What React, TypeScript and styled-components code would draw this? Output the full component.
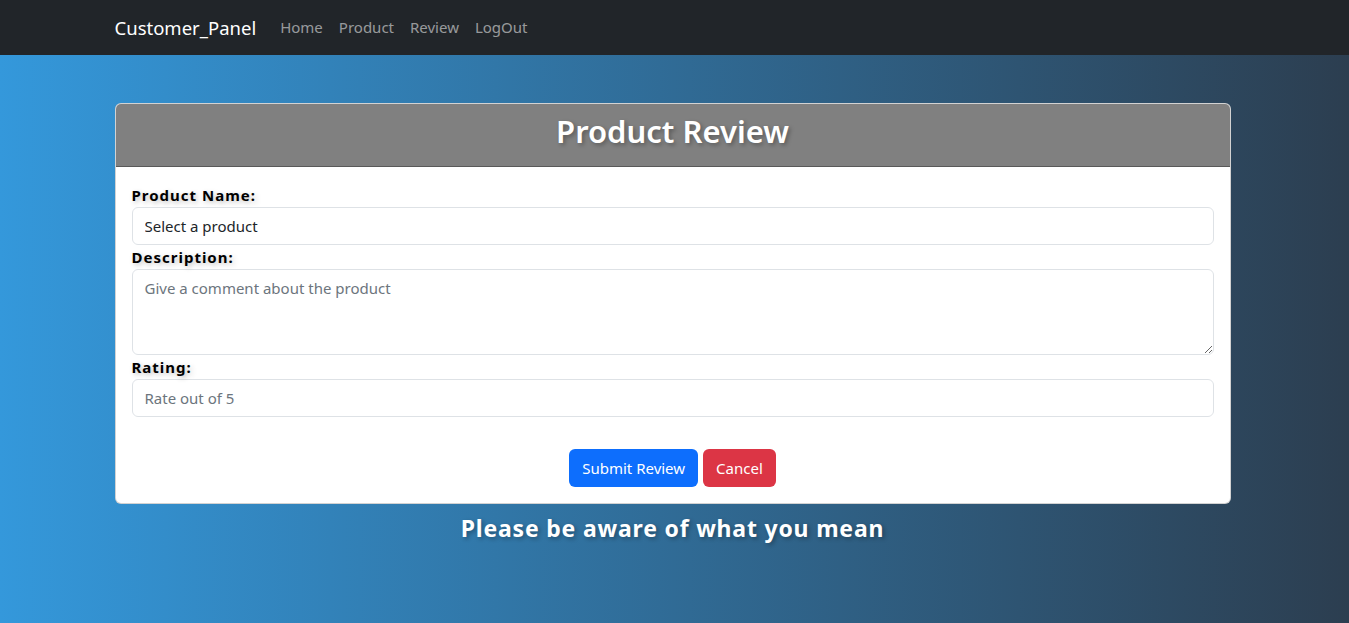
import React from "react";
import styled, {createGlobalStyle} from "styled-components";

const GlobalStyle = createGlobalStyle`
  * {
    box-sizing: border-box;
  }

  html, body {
    margin: 0;
    padding: 0;
  }

  body {
    min-height: 623px;
    font-family: "Noto Sans", "Open Sans", Arial, sans-serif;
    font-size: 16px;
    line-height: 1.5;
    color: #212529;
    background: linear-gradient(to right, #3498db, #2c3e50);
  }
`;

const Navbar = styled.nav`
  height: 55px;
  background-color: #212529;
`;

const Container = styled.div`
  max-width: 1140px;
  margin: 0 auto;
  padding: 0 14px 0 10px;
`;

const NavInner = styled(Container)`
  display: flex;
  align-items: center;
  height: 100%;
`;

const Brand = styled.a`
  font-size: 18.5px;
  color: #fff;
  margin-right: 16px;
  text-decoration: none;
`;

const NavLink = styled.a`
  padding: 8px;
  color: rgba(255, 255, 255, 0.55);
  text-decoration: none;
  font-size: 15px;
`;

const Card = styled.div`
  margin-top: 48px;
  background: #fff;
  border: 1px solid rgba(0, 0, 0, 0.175);
  border-radius: 6px;
  overflow: hidden;
`;

const CardHeader = styled.div`
  background-color: #808080;
  padding: 8px 16px;
  border-bottom: 1px solid rgba(0, 0, 0, 0.3);
  text-align: center;

  h2 {
    margin: 0 0 8px;
    font-size: 31px;
    line-height: 38.4px;
    font-weight: 600;
    color: #fff;
    text-shadow: 2px 2px 4px rgba(0, 0, 0, 0.3);
  }
`;

const CardBody = styled.form`
  padding: 16px;
`;

const Label = styled.label`
  display: block;
  font-weight: 700;
  font-size: 15px;
  line-height: 24px;
  letter-spacing: 1px;
  color: #000;
  text-shadow: 2px 2px 5px rgba(0, 0, 0, 0.25);
`;

const fieldStyles = `
  display: block;
  width: 100%;
  padding: 6px 12px;
  font-family: inherit;
  font-size: 15px;
  line-height: 24px;
  color: #212529;
  background: #fff;
  border: 1px solid #dee2e6;
  border-radius: 6px;
  outline: none;

  &::placeholder {
    color: #6c757d;
  }
`;

const Field = styled.input`
  ${fieldStyles}
  height: 38px;
`;

const TextArea = styled.textarea`
  ${fieldStyles}
  height: 86px;
  resize: vertical;
`;

const Actions = styled.div`
  display: flex;
  justify-content: center;
  gap: 5px;
  margin-top: 32px;
`;

const Button = styled.button<{$variant: "primary" | "danger"}>`
  height: 38px;
  padding: 6px 12px;
  font-family: inherit;
  font-size: 15px;
  line-height: 24px;
  color: #fff;
  border: 1px solid transparent;
  border-radius: 6px;
  background-color: ${p => (p.$variant === "primary" ? "#0d6efd" : "#dc3545")};
  cursor: pointer;
`;

const Notice = styled.h4`
  margin: 10px 0 0;
  text-align: center;
  font-size: 23px;
  line-height: 28.8px;
  font-weight: 700;
  letter-spacing: 0.8px;
  color: #fff;
  text-shadow: 2px 2px 4px rgba(0, 0, 0, 0.3);
`;

const App = () => (
    <>
        <GlobalStyle />
        <Navbar>
            <NavInner>
                <Brand href="#">Customer_Panel</Brand>
                <NavLink href="#">Home</NavLink>
                <NavLink href="#">Product</NavLink>
                <NavLink href="#">Review</NavLink>
                <NavLink href="#">LogOut</NavLink>
            </NavInner>
        </Navbar>
        <Container>
            <Card>
                <CardHeader>
                    <h2>Product Review</h2>
                </CardHeader>
                <CardBody onSubmit={e => e.preventDefault()}>
                    <Label>Product Name:</Label>
                    <Field value="Select a product" readOnly />
                    <Label>Description:</Label>
                    <TextArea placeholder="Give a comment about the product" />
                    <Label>Rating:</Label>
                    <Field placeholder="Rate out of 5" />
                    <Actions>
                        <Button $variant="primary" type="submit">Submit Review</Button>
                        <Button $variant="danger" type="button">Cancel</Button>
                    </Actions>
                </CardBody>
            </Card>
            <Notice>Please be aware of what you mean</Notice>
        </Container>
    </>
);

export default App;
